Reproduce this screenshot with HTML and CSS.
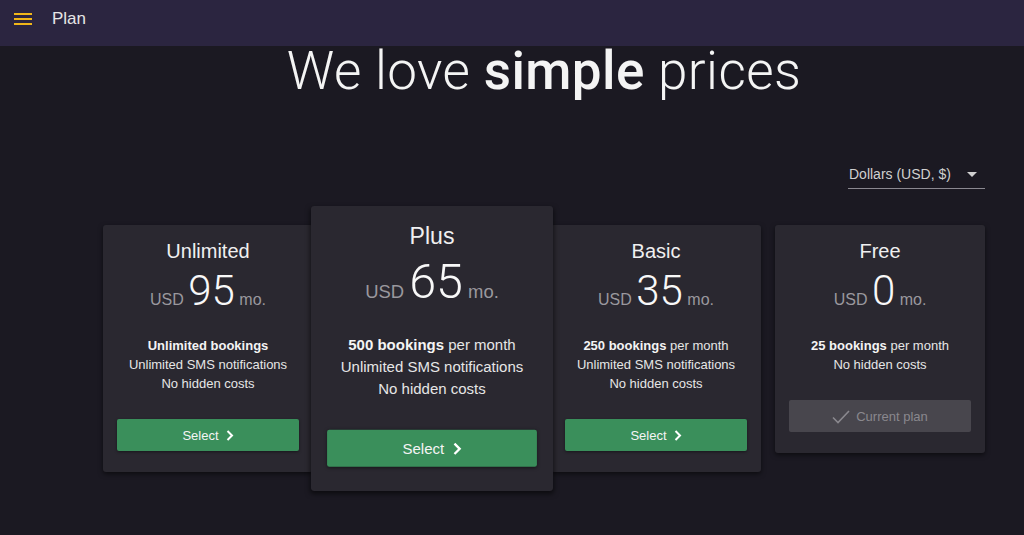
FILE: index.html
```html
<!DOCTYPE html>
<html lang="en">
<head>
<meta charset="utf-8">
<title>Plan</title>
<link rel="stylesheet" href="styles.css">
</head>
<body>
<header class="topbar">
  <button class="menu-btn" aria-label="Menu">
    <svg width="18" height="14" viewBox="0 0 18 14"><rect x="0" y="1" width="18" height="2" fill="#f0b619"/><rect x="0" y="6" width="18" height="2" fill="#f0b619"/><rect x="0" y="11" width="18" height="2" fill="#f0b619"/></svg>
  </button>
  <span class="topbar-title">Plan</span>
</header>
<main class="main">
  <h1 class="headline">We love <strong>simple</strong> prices</h1>
  <div class="currency-row">
    <div class="currency-select">
      <span>Dollars (USD, $)</span>
      <svg class="caret" width="10" height="5" viewBox="0 0 10 5"><path d="M0 0 L10 0 L5 5 Z" fill="#d0d0d0"/></svg>
    </div>
  </div>
  <div class="plans">
    <section class="card">
      <h2 class="plan-name">Unlimited</h2>
      <div class="price"><span class="cur">USD</span> <span class="amount">95</span> <span class="per">mo.</span></div>
      <ul class="features">
        <li><b>Unlimited bookings</b></li>
        <li>Unlimited SMS notifications</li>
        <li>No hidden costs</li>
      </ul>
      <button class="btn">Select <svg class="chev" width="8" height="11" viewBox="0 0 8 11"><path d="M1.5 1 L6 5.5 L1.5 10" fill="none" stroke="#fff" stroke-width="2"/></svg></button>
    </section>
    <section class="card featured">
      <h2 class="plan-name">Plus</h2>
      <div class="price"><span class="cur">USD</span> <span class="amount">65</span> <span class="per">mo.</span></div>
      <ul class="features">
        <li><b>500 bookings</b> per month</li>
        <li>Unlimited SMS notifications</li>
        <li>No hidden costs</li>
      </ul>
      <button class="btn">Select <svg class="chev" width="8" height="11" viewBox="0 0 8 11"><path d="M1.5 1 L6 5.5 L1.5 10" fill="none" stroke="#fff" stroke-width="2"/></svg></button>
    </section>
    <section class="card">
      <h2 class="plan-name">Basic</h2>
      <div class="price"><span class="cur">USD</span> <span class="amount">35</span> <span class="per">mo.</span></div>
      <ul class="features">
        <li><b>250 bookings</b> per month</li>
        <li>Unlimited SMS notifications</li>
        <li>No hidden costs</li>
      </ul>
      <button class="btn">Select <svg class="chev" width="8" height="11" viewBox="0 0 8 11"><path d="M1.5 1 L6 5.5 L1.5 10" fill="none" stroke="#fff" stroke-width="2"/></svg></button>
    </section>
    <section class="card">
      <h2 class="plan-name">Free</h2>
      <div class="price"><span class="cur">USD</span> <span class="amount">0</span> <span class="per">mo.</span></div>
      <ul class="features">
        <li><b>25 bookings</b> per month</li>
        <li>No hidden costs</li>
      </ul>
      <button class="btn btn-disabled" disabled><svg class="check" width="18" height="14" viewBox="0 0 18 14"><path d="M1 7.5 L6 12.5 L17 1" fill="none" stroke="#8a888e" stroke-width="1.6"/></svg> Current plan</button>
    </section>
  </div>
</main>
</body>
</html>
```
FILE: styles.css
```css
* { box-sizing: border-box; }
html, body { margin: 0; padding: 0; }
body {
  background: #1b1922;
  color: #e8e8e8;
  font-family: "Liberation Sans", Arial, sans-serif;
  height: 535px;
  overflow: hidden;
}
.topbar {
  height: 46px;
  background: #2b2540;
  display: flex;
  align-items: center;
  padding-left: 14px;
}
.menu-btn {
  background: none;
  border: 0;
  padding: 0;
  width: 18px;
  height: 14px;
  display: flex;
  margin-top: -8px;
}
.topbar-title {
  margin-left: 20px;
  font-size: 17px;
  color: #e6e6e6;
  margin-top: -9px;
}
.main {
  padding-left: 64px;
  display: flex;
  flex-direction: column;
  align-items: center;
}
.headline {
  margin: 0;
  font-family: Roboto, "Liberation Sans", sans-serif;
  font-weight: 300;
  font-size: 53px;
  line-height: 50px;
  color: #f4f4f4;
  letter-spacing: 0.4px;
  height: 50px;
}
.headline strong { font-weight: 500; }
.currency-row {
  width: 882px;
  display: flex;
  justify-content: flex-end;
  margin-top: 68px;
}
.currency-select {
  width: 137px;
  display: flex;
  align-items: center;
  justify-content: space-between;
  font-size: 14px;
  color: #d0d0d0;
  padding: 0 8px 4px 1px;
  line-height: 20px;
  border-bottom: 1px solid #8a8890;
}
.caret { margin-top: 1px; }
.plans {
  width: 882px;
  display: flex;
  gap: 14px;
  align-items: flex-start;
  margin-top: 36px;
}
.card {
  width: 210px;
  background: #2a2830;
  border-radius: 3px;
  box-shadow: 0 2px 5px rgba(0,0,0,0.55);
  padding: 13px 14px 21px;
  text-align: center;
  display: flex;
  flex-direction: column;
}
.featured {
  transform: scale(1.153);
  position: relative;
  z-index: 2;
  background: #2a2830;
}
.plan-name {
  margin: 0;
  font-weight: 400;
  font-size: 20px;
  line-height: 26px;
  color: #f0f0f0;
}
.price {
  line-height: 46px;
  height: 46px;
  margin-top: 4px;
  white-space: nowrap;
}
.cur, .per {
  font-size: 16px;
  color: #9a989e;
}
.amount {
  font-family: Roboto, "Liberation Sans", sans-serif;
  font-weight: 300;
  font-size: 42px;
  color: #f8f8f8;
}
.features {
  list-style: none;
  margin: 0;
  padding: 0;
  margin-top: 22px;
  font-size: 13px;
  line-height: 19px;
  color: #e6e6e6;
}
.features b { color: #f4f4f4; }
.btn {
  margin-top: 26px;
  height: 32px;
  border: 0;
  border-radius: 2px;
  background: #3a8f5b;
  color: #f4f4f4;
  font-family: "Liberation Sans", Arial, sans-serif;
  font-size: 13px;
  display: flex;
  align-items: center;
  justify-content: center;
  gap: 7px;
  box-shadow: 0 1px 3px rgba(0,0,0,0.45);
}
.chev { margin-top: 1px; }
.btn-disabled {
  background: #48464d;
  color: #8a888e;
  box-shadow: none;
  gap: 6px;
}
.check { margin-top: 1px; }
```
